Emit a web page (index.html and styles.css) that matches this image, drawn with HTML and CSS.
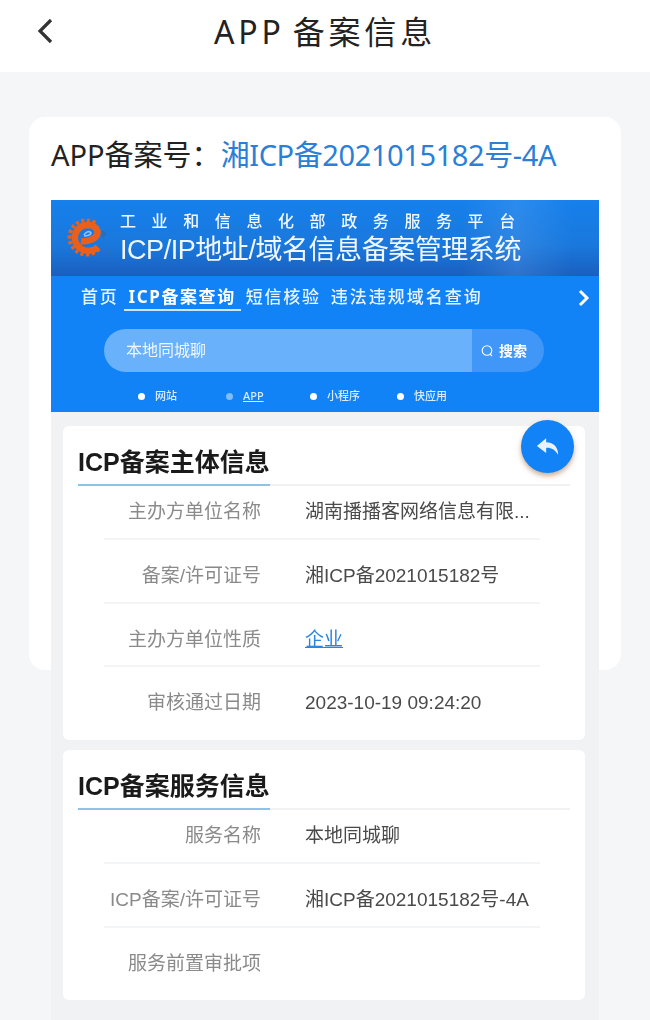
FILE: index.html
```html
<!DOCTYPE html>
<html lang="zh-CN">
<head>
    <meta charset="UTF-8">
    <meta name="viewport" content="width=device-width, initial-scale=1.0">
    <title>APP备案信息</title>
    <link rel="stylesheet" href="styles.css">
</head>
<body>
    <header class="top-bar">
        <svg class="back-icon" width="18" height="26" viewBox="0 0 18 26"><path d="M15 2 L4 13 L15 24" fill="none" stroke="#333" stroke-width="3.2"/></svg>
        <h1>APP 备案信息</h1>
    </header>
    <main class="page">
        <section class="record-card">
            <p class="record-no">APP备案号：<span class="record-link">湘ICP备2021015182号-4A</span></p>
            <div class="shot">
                <div class="banner">
                    <svg class="logo" width="46" height="46" viewBox="0 0 46 46">
                        <path d="M33 34 A17 17 0 1 1 31 9" fill="none" stroke="#e8601c" stroke-width="4" stroke-dasharray="3.2 2.4"/>
                        <path d="M32 32 C26 38 14 37 10 28 C6 19 13 10 22 10 C29 10 33 15 31 20 C28 25 20 27 15 26" fill="none" stroke="#ea5f1a" stroke-width="6.5"/>
                        <path d="M18 21 C21 21 25 20 25 18 C24 16 20 16 18 20" fill="none" stroke="#8cc7f5" stroke-width="1.6"/>
                        <path d="M36 15 L41 19 L36 24 Z" fill="#2a6cb8"/>
                    </svg>
                    <div class="banner-text">
                        <div class="banner-sub">工业和信息化部政务服务平台</div>
                        <div class="banner-main">ICP/IP地址/域名信息备案管理系统</div>
                    </div>
                </div>
                <div class="search-area">
                    <nav class="tabs">
                        <span>首页</span>
                        <span class="tab-active">ICP备案查询</span>
                        <span>短信核验</span>
                        <span class="tab-last">违法违规域名查询</span>
                        <svg class="tabs-more" width="12" height="18" viewBox="0 0 12 18"><path d="M2 2 L9 9 L2 16" fill="none" stroke="#fff" stroke-width="3"/></svg>
                    </nav>
                    <div class="search-box">
                        <span class="search-input">本地同城聊</span>
                        <span class="search-btn">
                            <svg width="14" height="14" viewBox="0 0 14 14"><circle cx="7" cy="6.5" r="4.8" fill="none" stroke="#fff" stroke-width="1.1"/><path d="M10 10 L12 12" stroke="#fff" stroke-width="1.1"/></svg>
                            <b>搜索</b>
                        </span>
                    </div>
                    <div class="types">
                        <span class="type"><i class="dot"></i>网站</span>
                        <span class="type type-active"><i class="dot"></i><u>APP</u></span>
                        <span class="type"><i class="dot"></i>小程序</span>
                        <span class="type"><i class="dot"></i>快应用</span>
                    </div>
                </div>
                <div class="panels">
                    <div class="panel">
                        <button class="reply-btn">
                            <svg width="24" height="19" viewBox="0 0 26 20"><path d="M11 1 L1 9.5 L11 17 L11 11.5 C16 11 20 13 24 19 C24 10 18 5.5 11 5.5 Z" fill="#e8f2fc"/></svg>
                        </button>
                        <h2 class="panel-title"><span>ICP备案主体信息</span></h2>
                        <div class="row"><span class="row-label">主办方单位名称</span><span class="row-value">湖南播播客网络信息有限...</span></div>
                        <div class="row"><span class="row-label">备案/许可证号</span><span class="row-value">湘ICP备2021015182号</span></div>
                        <div class="row"><span class="row-label">主办方单位性质</span><span class="row-value value-link">企业</span></div>
                        <div class="row"><span class="row-label">审核通过日期</span><span class="row-value">2023-10-19 09:24:20</span></div>
                    </div>
                    <div class="panel">
                        <h2 class="panel-title"><span>ICP备案服务信息</span></h2>
                        <div class="row"><span class="row-label">服务名称</span><span class="row-value">本地同城聊</span></div>
                        <div class="row"><span class="row-label">ICP备案/许可证号</span><span class="row-value">湘ICP备2021015182号-4A</span></div>
                        <div class="row"><span class="row-label">服务前置审批项</span><span class="row-value"></span></div>
                    </div>
                </div>
            </div>
        </section>
    </main>
</body>
</html>
```

FILE: styles.css
```css
html, body {
    height: 1020px;
    overflow: hidden;
}

body {
    font-family: "Noto Sans", "Noto Sans CJK SC", sans-serif;
    background-color: #f5f6f8;
    margin: 0;
    padding: 0;
}

.top-bar {
    height: 72px;
    background: #fff;
    display: flex;
    align-items: center;
    justify-content: center;
    position: relative;
}

.top-bar h1 {
    margin: 0 0 9px;
    font-size: 32px;
    font-weight: 400;
    letter-spacing: 3.8px;
    word-spacing: -4px;
    color: #222;
    line-height: 40px;
}

.back-icon {
    position: absolute;
    left: 36px;
    top: 18px;
}

.page {
    padding: 45px 29px 0;
}

.record-card {
    height: 553px;
    background: #fff;
    border-radius: 16px;
    padding: 0 22px;
}

.record-no {
    margin: 0;
    padding-top: 18px;
    height: 65px;
    font-size: 29px;
    line-height: 40px;
    color: #222;
    white-space: nowrap;
}

.record-link {
    color: #2b7fd6;
    letter-spacing: -0.4px;
}

/* 备案系统截图 */
.shot {
    background: #f1f2f3;
    height: 830px;
    filter: blur(0.35px);
}

.banner {
    height: 76px;
    background:
        linear-gradient(90deg, transparent 75%, rgba(120, 180, 245, 0.22) 85%, transparent 95%),
        linear-gradient(180deg, #1680ec 0%, #1a78dc 60%, #1a5fbf 100%);
    display: flex;
    align-items: center;
    padding-left: 15px;
}

.logo {
    margin-right: 8px;
    flex-shrink: 0;
}

.banner-text {
    color: #f0f7ff;
    padding-top: 3px;
}

.banner-sub {
    font-size: 16px;
    font-weight: 500;
    line-height: 20px;
    margin-bottom: 1px;
    letter-spacing: 15.6px;
    white-space: nowrap;
}

.banner-main {
    font-family: "Liberation Sans", "Noto Sans CJK SC", sans-serif;
    font-size: 27px;
    line-height: 36px;
    letter-spacing: -0.45px;
    white-space: nowrap;
}

.search-area {
    height: 136px;
    background: #1283f6;
    color: #fff;
}

.tabs {
    height: 53px;
    display: flex;
    align-items: flex-start;
    padding: 9px 0 0 30px;
    box-sizing: border-box;
    gap: 5px;
    font-size: 17px;
    line-height: 24px;
    font-weight: 500;
    letter-spacing: 1.75px;
    position: relative;
    color: #e6f2ff;
}

.tab-active {
    font-weight: 700;
    color: #fff;
    border-bottom: 2px solid #cfe4fb;
    padding: 0 5px;
    letter-spacing: 1.6px;
}

.tab-last {
    margin-left: 5px;
    letter-spacing: 2px;
}

.tabs-more {
    position: absolute;
    right: 9px;
    top: 13px;
}

.search-box {
    margin-left: 53px;
    width: 440px;
    height: 43px;
    display: flex;
    border-radius: 22px;
    overflow: hidden;
    font-size: 16px;
    line-height: 43px;
}

.search-input {
    width: 368px;
    background: #69b1fb;
    padding-left: 22px;
    box-sizing: border-box;
    color: #eef6ff;
}

.search-btn {
    flex: 1;
    background: #4097f8;
    display: flex;
    align-items: center;
    padding-left: 8px;
    gap: 5px;
    font-size: 14px;
}

.types {
    display: flex;
    margin-top: 16px;
    padding-left: 87px;
    font-size: 11px;
    font-weight: 500;
    line-height: 16px;
    color: #dcecff;
}

.type {
    width: 87px;
    display: flex;
    align-items: center;
    gap: 10px;
}

.type:nth-child(1) {
    width: 88px;
}

.type:nth-child(2) {
    width: 84px;
}

.dot {
    width: 7px;
    height: 7px;
    border-radius: 50%;
    background: #fff;
}

.type-active .dot {
    background: #7fbcf9;
}

.panels {
    padding: 14px 14px 0 12px;
}

.panel {
    background: #fff;
    border-radius: 6px;
    margin-bottom: 10px;
    padding: 0 15px 9px;
    position: relative;
}

.reply-btn {
    position: absolute;
    right: 11px;
    top: -6px;
    width: 53px;
    height: 53px;
    border: none;
    border-radius: 50%;
    background: #1283f6;
    box-shadow: 0 3px 5px rgba(160, 110, 70, 0.55);
    display: flex;
    align-items: center;
    justify-content: center;
    padding: 0;
}

.panel-title {
    margin: 0;
    height: 60px;
    box-sizing: border-box;
    border-bottom: 2px solid #f0f1f2;
    display: flex;
    align-items: flex-end;
}

.panel-title span {
    font-family: "Liberation Sans", "Noto Sans CJK SC", sans-serif;
    font-size: 25px;
    font-weight: 700;
    line-height: 38px;
    color: #1a1a1a;
    border-bottom: 2px solid #8cc3e8;
    margin-bottom: -2px;
    padding-bottom: 3px;
}

.row {
    margin: 0 30px 0 26px;
    height: 63.7px;
    padding-top: 22px;
    display: flex;
    align-items: flex-start;
    font-size: 19px;
    line-height: 28px;
    border-bottom: 2px solid #f3f4f5;
    box-sizing: border-box;
}

.panel-title + .row {
    height: 54px;
    padding-top: 12px;
}

.row:last-child {
    border-bottom: none;
}

.row-label {
    width: 157px;
    text-align: right;
    color: #8a8a8a;
    flex-shrink: 0;
    font-family: "Liberation Sans", "Noto Sans CJK SC", sans-serif;
    white-space: nowrap;
}

.row-value {
    margin-left: 44px;
    color: #4a4a4a;
    font-family: "Liberation Sans", "Noto Sans CJK SC", sans-serif;
    white-space: nowrap;
}

.value-link {
    color: #2b86e0;
    text-decoration: underline;
}
```
